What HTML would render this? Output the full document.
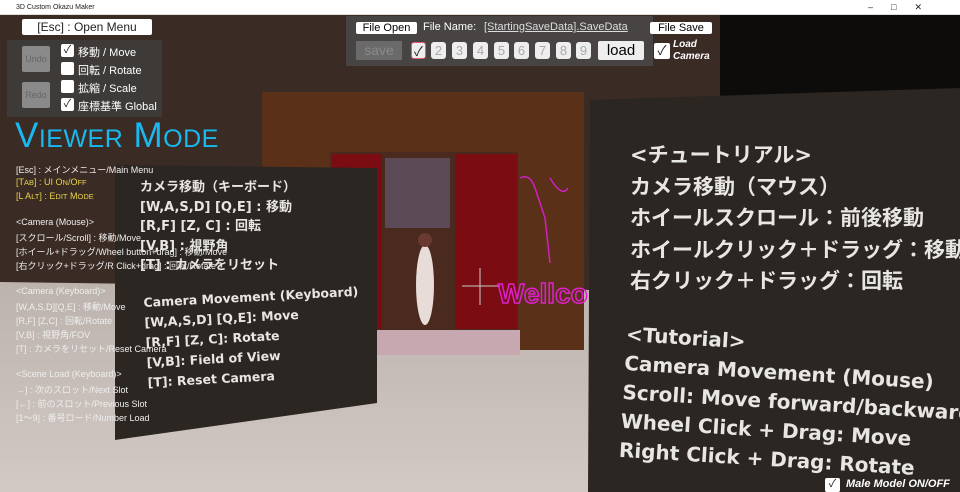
<!DOCTYPE html>
<html><head><meta charset="utf-8"><style>
*{margin:0;padding:0;box-sizing:border-box}
body{width:960px;height:492px;overflow:hidden;position:relative;background:#3a2b25;font-family:"Liberation Sans","Noto Sans CJK JP",sans-serif}
.a{position:absolute}
.poly{position:absolute;left:0;top:0;width:960px;height:492px}
.cb{position:absolute;width:13px;height:13px;background:#fff;border-radius:2px;font-size:11px;line-height:13px;text-align:center;color:#222}
.lbl{position:absolute;color:#fff;font-size:11px;white-space:nowrap}
.lt{position:absolute;left:16px;font-size:9px;color:#eee;white-space:nowrap}
.y{color:#e8d24a}
.bj{position:absolute;color:#e8e6e2;font-weight:bold;white-space:nowrap;font-family:"DejaVu Sans","Noto Sans CJK JP",sans-serif}
.num{position:absolute;top:42px;width:15px;height:17px;background:#eee;border-radius:3px;color:#aaa;font-size:13px;text-align:center;line-height:17px}
</style></head><body>
<svg class="poly" viewBox="0 0 960 492">
<defs><linearGradient id="fl" x1="0" y1="0" x2="0" y2="1"><stop offset="0" stop-color="#bdb3ae"/><stop offset="1" stop-color="#d2c8c4"/></linearGradient></defs>
<rect x="0" y="0" width="960" height="492" fill="#3b2b25"/>
<polygon points="0,282 590,290 590,492 0,492" fill="url(#fl)"/>
<polygon points="720,15 960,15 960,90 720,100" fill="#0e0c0b"/>
<rect x="262" y="92" width="322" height="258" fill="#5a3018"/>
<rect x="330" y="152" width="188" height="180" fill="#4a2a1e"/>
<rect x="332" y="154" width="50" height="175" fill="#7a0c12"/>
<rect x="455" y="154" width="62" height="175" fill="#7a0c12"/>
<rect x="385" y="158" width="65" height="70" fill="#5a4a55"/>
<rect x="335" y="330" width="185" height="25" fill="#c8a8b0"/>
<ellipse cx="425" cy="285" rx="9" ry="40" fill="#e8dcd8"/>
<circle cx="425" cy="240" r="7" fill="#6a3a30"/>
<polygon points="115,165 377,168 377,403 115,440" fill="#2b2622"/>
<polygon points="590,100 960,88 960,492 588,492" fill="#2b2622"/>
<path d="M520,178 q10,-5 15,10 l10,30 l5,45 M550,178 q12,20 18,10" stroke="#d020c0" stroke-width="1.5" fill="none"/>
<line x1="462" y1="286" x2="500" y2="286" stroke="#ccc" stroke-width="1"/>
<line x1="480" y1="268" x2="480" y2="305" stroke="#ccc" stroke-width="1"/>
</svg>
<div class="a" style="left:498px;top:278px;font-size:28px;color:transparent;-webkit-text-stroke:1.5px #e020d0;font-weight:bold">Wellco</div>
<div class="a" style="left:0;top:0;width:960px;height:15px;background:#fff;border-bottom:1px solid #ddd;font-size:7px;line-height:15px;padding-left:16px;color:#222">3D Custom Okazu Maker<span style="position:absolute;right:20px;font-size:9px;letter-spacing:18px">–□✕</span></div>
<div class="a" style="left:22px;top:19px;width:130px;height:16px;background:#fff;border-radius:2px;font-size:12px;line-height:16px;text-align:center;color:#222">[Esc] : Open Menu</div>
<div class="a" style="left:7px;top:40px;width:155px;height:77px;background:rgba(62,60,58,.92)"></div>
<div class="a" style="left:22px;top:46px;width:28px;height:26px;background:#8a8a8a;border-radius:2px;color:#666;font-size:9px;line-height:26px;text-align:center">Undo</div>
<div class="a" style="left:22px;top:82px;width:28px;height:26px;background:#8a8a8a;border-radius:2px;color:#666;font-size:9px;line-height:26px;text-align:center">Redo</div>
<div class="cb" style="left:61px;top:44px">✓</div><div class="lbl" style="left:78px;top:44px">移動 / Move</div>
<div class="cb" style="left:61px;top:62px"></div><div class="lbl" style="left:78px;top:62px">回転 / Rotate</div>
<div class="cb" style="left:61px;top:80px"></div><div class="lbl" style="left:78px;top:80px">拡縮 / Scale</div>
<div class="cb" style="left:61px;top:98px">✓</div><div class="lbl" style="left:78px;top:98px">座標基準 Global</div>
<div class="a" style="left:15px;top:116px;font-size:35px;color:#18b8f0;font-variant:small-caps;letter-spacing:.5px">Viewer Mode</div>
<div class="lt" style="top:163px">[Esc] : メインメニュー/Main Menu</div>
<div class="lt y" style="top:177px">[T<small>AB</small>] : UI O<small>N</small>/O<small>FF</small></div>
<div class="lt y" style="top:191px">[L A<small>LT</small>] : E<small>DIT</small> M<small>ODE</small></div>
<div class="lt" style="top:217px">&lt;Camera (Mouse)&gt;</div>
<div class="lt" style="top:231px">[スクロール/Scroll] : 移動/Move</div>
<div class="lt" style="top:245px">[ホイール+ドラッグ/Wheel button+drag] : 移動/Move</div>
<div class="lt" style="top:259px">[右クリック+ドラッグ/R Click+drag] : 回転/Rotate</div>
<div class="lt" style="top:286px">&lt;Camera (Keyboard)&gt;</div>
<div class="lt" style="top:300px">[W,A,S,D][Q,E] : 移動/Move</div>
<div class="lt" style="top:314px">[R,F] [Z,C] : 回転/Rotate</div>
<div class="lt" style="top:328px">[V,B] : 視野角/FOV</div>
<div class="lt" style="top:342px">[T] : カメラをリセット/Reset Camera</div>
<div class="lt" style="top:369px">&lt;Scene Load (Keyboard)&gt;</div>
<div class="lt" style="top:383px">→] : 次のスロット/Next Slot</div>
<div class="lt" style="top:397px">[←] : 前のスロット/Previous Slot</div>
<div class="lt" style="top:411px">[1～9] : 番号ロード/Number Load</div>
<div class="bj" style="left:140px;top:178px;font-size:13px;line-height:19.5px">カメラ移動（キーボード）<br>[W,A,S,D] [Q,E] : 移動<br>[R,F] [Z, C] : 回転<br>[V,B] : 視野角<br>[T] : カメラをリセット</div>
<div class="bj" style="left:143px;top:293px;font-size:12.5px;line-height:20px;transform:rotate(-3deg);transform-origin:left top">Camera Movement (Keyboard)<br>[W,A,S,D] [Q,E]: Move<br>[R,F] [Z, C]: Rotate<br>[V,B]: Field of View<br>[T]: Reset Camera</div>
<div class="bj" style="left:630px;top:140px;font-size:21px;line-height:31.5px">&lt;チュートリアル&gt;<br>カメラ移動（マウス）<br>ホイールスクロール：前後移動<br>ホイールクリック＋ドラッグ：移動<br>右クリック＋ドラッグ：回転</div>
<div class="bj" style="left:627px;top:320px;font-size:20px;line-height:29px;transform:rotate(3.5deg);transform-origin:left top">&lt;Tutorial&gt;<br>Camera Movement (Mouse)<br>Scroll: Move forward/backward<br>Wheel Click + Drag: Move<br>Right Click + Drag: Rotate</div>
<div class="a" style="left:346px;top:16px;width:307px;height:50px;background:rgba(72,70,68,.95)"></div>
<div class="a" style="left:356px;top:22px;width:61px;height:12px;background:#fff;border-radius:2px;font-size:11px;line-height:12px;text-align:center">File Open</div>
<div class="a" style="left:423px;top:21px;font-size:11px;color:#fff">File Name:</div>
<div class="a" style="left:484px;top:21px;font-size:11px;color:#ddd;text-decoration:underline">[StartingSaveData].SaveData</div>
<div class="a" style="left:650px;top:22px;width:62px;height:12px;background:#fff;border-radius:2px;font-size:11px;line-height:12px;text-align:center">File Save</div>
<div class="a" style="left:356px;top:41px;width:46px;height:19px;background:#6a6a6a;color:#8a8a8a;font-size:14px;line-height:19px;text-align:center">save</div>
<div class="num" style="left:411px;color:#222;border:1.5px solid #e06070">✓</div>
<div class="num" style="left:431px">2</div><div class="num" style="left:452px">3</div><div class="num" style="left:473px">4</div><div class="num" style="left:494px">5</div><div class="num" style="left:514px">6</div><div class="num" style="left:535px">7</div><div class="num" style="left:556px">8</div><div class="num" style="left:576px">9</div>
<div class="a" style="left:598px;top:41px;width:46px;height:19px;background:#eee;border-radius:2px;font-size:15px;line-height:19px;text-align:center">load</div>
<div class="cb" style="left:654px;top:43px;width:16px;height:16px;font-size:13px;line-height:16px">✓</div>
<div class="a" style="left:673px;top:39px;font-size:10px;line-height:12px;color:#fff;font-style:italic;font-weight:bold">Load<br>Camera</div>
<div class="cb" style="left:825px;top:478px;width:15px;height:14px">✓</div>
<div class="a" style="left:846px;top:478px;font-size:11px;color:#fff;font-style:italic;font-weight:bold">Male Model ON/OFF</div>
</body></html>
